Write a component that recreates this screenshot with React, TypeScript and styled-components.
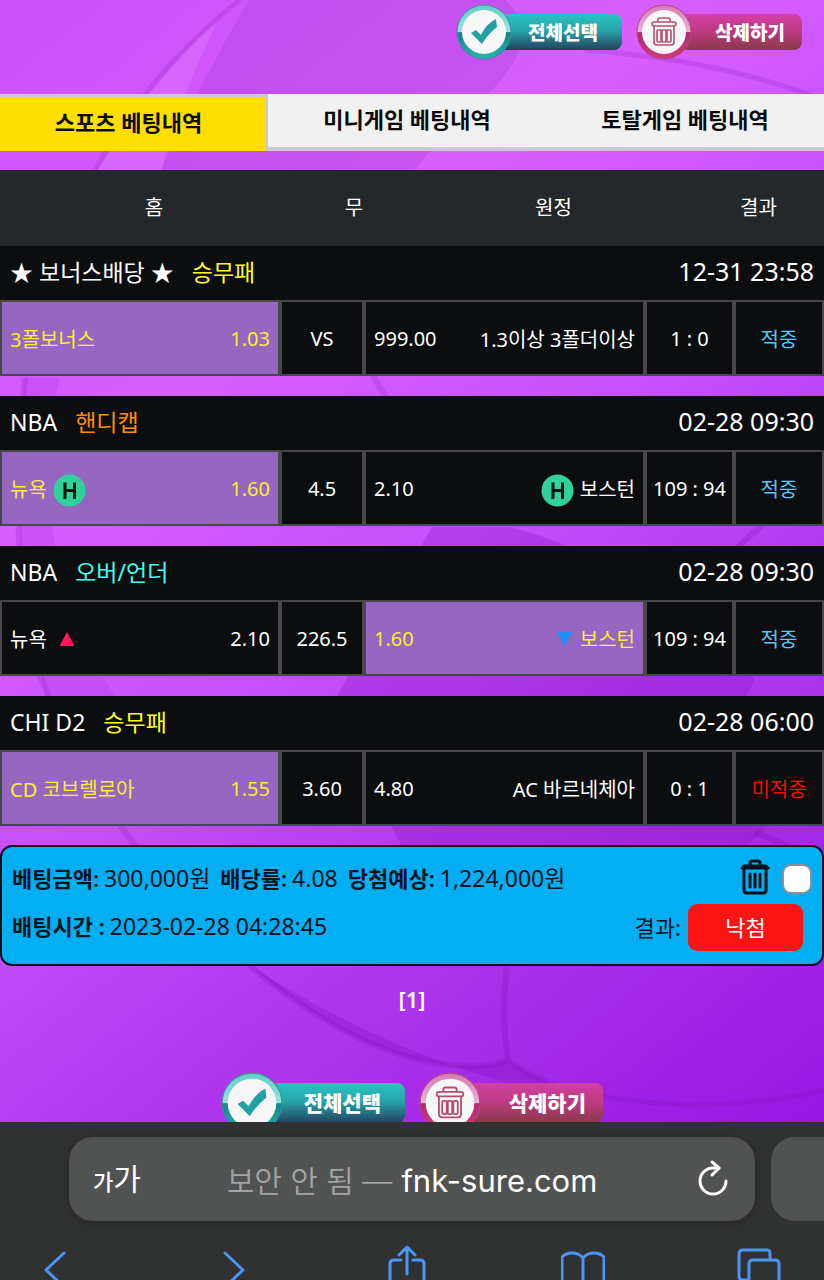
import React from "react";
import styled, { createGlobalStyle } from "styled-components";

const GlobalStyle = createGlobalStyle`
  *, *::before, *::after { box-sizing: border-box; }
  body {
    margin: 0;
    background: #303131;
    font-family: "Noto Sans", "Noto Sans CJK KR", sans-serif;
    color: #fff;
  }
  button { font: inherit; border: 0; padding: 0; background: none; color: inherit; cursor: pointer; }
  a { color: inherit; text-decoration: none; }
`;

const Shell = styled.div`
  display: flex;
  flex-direction: column;
  height: 100vh;
  overflow: hidden;
`;

const Page = styled.main`
  position: relative;
  flex: 1;
  min-height: 0;
  overflow: hidden;
  background: linear-gradient(142deg, #cb50fa 0%, #d85eff 30%, #c750fb 50%, #b23aef 68%, #9816e2 100%);
`;

const Backdrop = styled.svg`
  position: absolute;
  inset: 0;
  width: 100%;
  height: 100%;
`;

const Content = styled.div`
  position: relative;
`;

const TopActions = styled.div`
  display: flex;
  justify-content: flex-end;
  gap: 14px;
  height: 94px;
  padding: 4px 22px 0 0;
`;

const BottomActions = styled.div`
  display: flex;
  justify-content: center;
  gap: 14px;
  padding-top: 58px;
`;

const ActionButton = styled.button<{ $large?: boolean }>`
  display: flex;
  align-items: center;
  width: ${(p) => (p.$large ? 184 : 166)}px;
  height: ${(p) => (p.$large ? 62 : 56)}px;
`;

const ActionBadge = styled.svg<{ $large?: boolean }>`
  position: relative;
  flex: none;
  width: ${(p) => (p.$large ? 62 : 56)}px;
  height: ${(p) => (p.$large ? 62 : 56)}px;
`;

const ActionLabel = styled.span<{ $tone: "teal" | "pink"; $large?: boolean }>`
  flex: 1;
  display: flex;
  align-items: center;
  justify-content: flex-end;
  height: ${(p) => (p.$large ? 40 : 36)}px;
  margin-left: -12px;
  padding-right: ${(p) => (p.$tone === "teal" ? 24 : 17)}px;
  padding-bottom: 2px;
  border-radius: 0 8px 8px 0;
  background: ${(p) =>
    p.$tone === "teal"
      ? "linear-gradient(180deg, #2cc3c3 0%, #26a5ab 45%, #25415f 100%)"
      : "linear-gradient(180deg, #d43fa6 0%, #bb3a80 50%, #8a3a4a 100%)"};
  font-family: "Noto Sans CJK KR", sans-serif;
  font-size: ${(p) => (p.$large ? 21 : 19)}px;
  font-weight: 900;
  line-height: 1;
  white-space: nowrap;
`;

const Tabs = styled.nav`
  display: grid;
  grid-template-columns: 268fr 278fr 278fr;
  height: 57px;
`;

const Tab = styled.button<{ $active?: boolean }>`
  font-size: 22px;
  font-weight: 600;
  color: #0b0b0b;
  line-height: 30px;
  background: ${(p) => (p.$active ? "#ffdf00" : "#f1f1f1")};
  border-style: solid;
  border-color: #cbc8cf;
  border-width: ${(p) => (p.$active ? "3px 3px 0 0" : "0 0 4px 0")};
  padding: 0 ${(p) => (p.$active ? 8 : 0)}px 4px 0;
`;

const Bets = styled.table`
  display: block;
  margin-top: 19px;
`;

const BetsHead = styled.thead`
  display: block;
  background: #25282b;
`;

const HeadRow = styled.tr`
  display: grid;
  grid-template-columns: 308fr 92fr 307fr 103fr;
  align-items: center;
  height: 76px;
  padding-right: 14px;
`;

const HeadCell = styled.th`
  padding: 0 0 4px;
  font-size: 20px;
  font-weight: 400;
`;

const Match = styled.tbody`
  display: block;
  & + & { margin-top: 20px; }
`;

const TitleRow = styled.tr`
  display: flex;
  align-items: center;
  justify-content: space-between;
  height: 54px;
  padding: 0 10px;
  background: #0c0d0f;
`;

const League = styled.th`
  display: flex;
  align-items: baseline;
  gap: 18px;
  padding: 0 0 4px;
  font-size: 23px;
  font-weight: 400;
`;

const Market = styled.span<{ $color: string }>`
  color: ${(p) => p.$color};
`;

const Kickoff = styled.td`
  padding: 0 0 4px;
  font-size: 25px;
`;

const OddsRow = styled.tr`
  display: grid;
  grid-template-columns: 280fr 84fr 281fr 89fr 90fr;
  height: 76px;
`;

const Odds = styled.td<{ $picked?: boolean; $spread?: boolean; $color?: string }>`
  display: flex;
  align-items: center;
  justify-content: ${(p) => (p.$spread ? "space-between" : "center")};
  padding: 0 ${(p) => (p.$spread ? 8 : 0)}px;
  border: 2px solid #48484a;
  background: ${(p) => (p.$picked ? "#9567c1" : "#0c0d0f")};
  color: ${(p) => p.$color ?? (p.$picked ? "#fbee2c" : "#fff")};
  font-size: 20px;
  white-space: nowrap;
`;

const Team = styled.span`
  display: flex;
  align-items: center;
  gap: 6px;
`;

const MarkIcon = styled.svg`
  width: 33px;
  height: 33px;
  margin-top: 4px;
`;

const Slip = styled.section`
  display: flex;
  flex-direction: column;
  height: 121px;
  margin-top: 19px;
  padding: 8px 10px;
  border: 2px solid #061018;
  border-radius: 12px;
  background: #03aef3;
  color: #06141f;
`;

const SlipRow = styled.div`
  display: flex;
  align-items: center;
  justify-content: space-between;
  height: 48px;
`;

const Facts = styled.dl`
  display: flex;
  align-items: baseline;
  gap: 10px;
  margin: 0;
  padding-bottom: 4px;
`;

const Fact = styled.div`
  display: flex;
  align-items: baseline;
  gap: 5px;
`;

const FactName = styled.dt`
  font-size: 22px;
  font-weight: 600;
`;

const FactValue = styled.dd`
  margin: 0;
  font-size: 23px;
`;

const SlipTools = styled.div`
  display: flex;
  align-items: center;
  gap: 11px;
`;

const IconButton = styled.button`
  display: flex;
  padding-bottom: 5px;
`;

const SelectBox = styled.input`
  appearance: none;
  width: 30px;
  height: 30px;
  margin: 0;
  border: 2px solid #8d8d93;
  border-radius: 9px;
  background: #fff;
`;

const Verdict = styled.div`
  display: flex;
  align-items: center;
  gap: 7px;
  padding-right: 9px;
  font-size: 22px;
`;

const VerdictLabel = styled.span`
  padding-bottom: 3px;
`;

const VerdictButton = styled.button`
  width: 115px;
  height: 47px;
  padding-bottom: 3px;
  border-radius: 9px;
  background: #fb1414;
  color: #fff;
`;

const Pager = styled.nav`
  padding-top: 18px;
  text-align: center;
  font-size: 22px;
  font-weight: 600;
  line-height: 30px;
`;

const Chrome = styled.footer`
  flex: none;
  background: #303131;
  padding-top: 15px;
`;

const TabStrip = styled.div`
  display: flex;
  gap: 16px;
  padding-left: 69px;
`;

const AddressBar = styled.div`
  flex: 1;
  display: grid;
  grid-template-columns: 1fr auto 1fr;
  align-items: center;
  height: 84px;
  padding: 0 24px;
  border-radius: 24px;
  background: #515252;
  box-shadow: 0 2px 10px rgba(0, 0, 0, 0.2);
`;

const NextTab = styled.div`
  flex: none;
  width: 53px;
  border-radius: 24px 0 0 24px;
  background: #515252;
`;

const TextSize = styled.button`
  display: flex;
  align-items: baseline;
  justify-self: start;
  padding-bottom: 4px;
  font-family: "Noto Sans CJK KR", sans-serif;
  font-size: 22px;
  font-weight: 500;
`;

const TextSizeLarge = styled.span`
  font-size: 30px;
  font-weight: 400;
`;

const Address = styled.a`
  display: flex;
  align-items: baseline;
  gap: 9px;
  font-family: Inter, "Noto Sans CJK KR", sans-serif;
  font-size: 31px;
  white-space: nowrap;
`;

const Insecure = styled.span`
  font-size: 30px;
  font-weight: 350;
  color: #a3a4a6;
`;

const Reload = styled.button`
  display: flex;
  justify-self: end;
  padding-bottom: 3px;
`;

const Toolbar = styled.nav`
  display: flex;
  justify-content: space-between;
  height: 59px;
  padding: 23px 43px 0 33px;
  overflow: hidden;
`;

const ToolIcon = styled.svg`
  width: 44px;
  height: 44px;
  fill: none;
  stroke: #4d95f5;
  stroke-width: 3;
  stroke-linecap: round;
  stroke-linejoin: round;
`;

function BallBackdrop() {
  return (
    <Backdrop viewBox="0 0 824 1122" preserveAspectRatio="none" aria-hidden="true">
      <path d="M250 0 Q220 45 160 170 L415 170 L430 151 L492 90 Q545 35 505 0Z" fill="#a63bcf" opacity=".3" />
      <path d="M218 20 Q160 70 98 170 L162 170 Q175 110 218 20Z" fill="#e07cff" opacity=".4" />
      <path d="M240 0 Q150 70 95 170" fill="none" stroke="#a22fd2" strokeWidth="5" opacity=".3" />
      <path d="M585 50 Q720 60 824 100" fill="none" stroke="#a22fd2" strokeWidth="5" opacity=".3" />
      <path d="M345 300 Q360 360 388 400" fill="none" stroke="#a22fd2" strokeWidth="6" opacity=".3" />
      <path d="M60 378 Q42 440 54 540 Q70 630 117 700 L47 700 Q5 540 25 378" fill="#a22fd2" opacity=".2" />
      <path d="M25 378 Q5 540 40 676 Q110 850 250 966" fill="none" stroke="#9a24cc" strokeWidth="6" opacity=".28" />
      <path d="M432 527 L510 527 Q640 560 755 680 L744 700 L765 830 L745 848 L403 848 Q370 790 337 696Z" fill="#7c10b8" opacity=".26" />
      <path d="M790 500 Q700 580 640 640" fill="none" stroke="#8519bd" strokeWidth="6" opacity=".3" />
      <path d="M755 832 L824 862" fill="none" stroke="#7c10b8" strokeWidth="6" opacity=".3" />
      <path d="M250 966 Q370 1066 470 1066 Q495 1066 508 1060 L513 1064 Q545 1085 600 1100 Q430 1080 250 966Z" fill="#7c10b8" opacity=".28" />
      <path d="M250 966 Q370 1066 470 1066 Q495 1066 508 1060 Q500 1010 508 960" fill="none" stroke="#7c10b8" strokeWidth="6" opacity=".24" />
      <path d="M511 1062 Q560 1100 690 1105 Q770 1104 824 1090" fill="none" stroke="#7c10b8" strokeWidth="5" opacity=".24" />
    </Backdrop>
  );
}

function Action({ tone, large, label }: { tone: "teal" | "pink"; large?: boolean; label: string }) {
  const teal = tone === "teal";
  const id = `${tone}-${large ? "large" : "small"}`;
  return (
    <ActionButton type="button" $large={large}>
      <ActionBadge viewBox="0 0 56 56" $large={large} aria-hidden="true">
        <defs>
          <linearGradient id={id} x1="0" y1="0" x2="0" y2="1">
            <stop offset="0" stopColor={teal ? "#5fcfc6" : "#d77ab4"} />
            <stop offset=".5" stopColor={teal ? "#9be2db" : "#e9b4d4"} />
            <stop offset=".51" stopColor={teal ? "#16838a" : "#b12c6c"} />
            <stop offset="1" stopColor={teal ? "#25b5b0" : "#d4387c"} />
          </linearGradient>
        </defs>
        <circle cx="28" cy="28" r="27" fill={`url(#${id})`} stroke={teal ? "#3a8f98" : "#a94a80"} strokeWidth="1" />
        <circle cx="28" cy="28" r="22" fill="#f8f7f8" />
        {teal ? (
          <path d="M15 29 L20 26 L25 31 Q30 20 40 15 L41 23 Q32 30 26 40Z" fill="#23a0a3" />
        ) : (
          <g fill="none" stroke="#b54b70" strokeWidth="1.6" strokeLinejoin="round">
            <path d="M22 18 V16 Q22 14 24 14 H32 Q34 14 34 16 V18" />
            <rect x="16" y="18" width="24" height="4" rx="2" />
            <path d="M18 22 V38 Q18 41 21 41 H35 Q38 41 38 38 V22" />
            <rect x="21" y="26" width="4" height="12" rx="1" />
            <rect x="26" y="26" width="4" height="12" rx="1" />
            <rect x="31" y="26" width="4" height="12" rx="1" />
          </g>
        )}
      </ActionBadge>
      <ActionLabel $tone={tone} $large={large}>{label}</ActionLabel>
    </ActionButton>
  );
}

type MarkKind = "H" | "up" | "down";

function Mark({ kind }: { kind: MarkKind }) {
  return (
    <MarkIcon viewBox="0 0 33 33" aria-hidden="true">
      {kind === "H" && (
        <>
          <circle cx="16.5" cy="16.5" r="16" fill="#31d19c" />
          <path d="M12 8.5 V25 M21.5 8.5 V25 M12 16.5 H21.5" stroke="#0a1512" strokeWidth="3" fill="none" />
        </>
      )}
      {kind === "up" && <path d="M6.500 22 L14 8 L21.500 22Z" fill="#ff1a5e" />}
      {kind === "down" && <path d="M15.5 8 L31 8 L23.500 22Z" fill="#1e90ff" />}
    </MarkIcon>
  );
}

interface MatchData {
  league: string;
  market: string;
  marketColor: string;
  time: string;
  home: string;
  homeOdds: string;
  draw: string;
  awayOdds: string;
  away: string;
  homeMark?: MarkKind;
  awayMark?: MarkKind;
  pick: "home" | "away";
  score: string;
  hit: boolean;
}

const matches: MatchData[] = [
  { league: "★ 보너스배당 ★", market: "승무패", marketColor: "#ffff1a", time: "12-31 23:58", home: "3폴보너스", homeOdds: "1.03", draw: "VS", awayOdds: "999.00", away: "1.3이상 3폴더이상", pick: "home", score: "1 : 0", hit: true },
  { league: "NBA", market: "핸디캡", marketColor: "#ff8c00", time: "02-28 09:30", home: "뉴욕", homeMark: "H", homeOdds: "1.60", draw: "4.5", awayOdds: "2.10", away: "보스턴", awayMark: "H", pick: "home", score: "109 : 94", hit: true },
  { league: "NBA", market: "오버/언더", marketColor: "#40ffee", time: "02-28 09:30", home: "뉴욕", homeMark: "up", homeOdds: "2.10", draw: "226.5", awayOdds: "1.60", away: "보스턴", awayMark: "down", pick: "away", score: "109 : 94", hit: true },
  { league: "CHI D2", market: "승무패", marketColor: "#ffff1a", time: "02-28 06:00", home: "CD 코브렐로아", homeOdds: "1.55", draw: "3.60", awayOdds: "4.80", away: "AC 바르네체아", pick: "home", score: "0 : 1", hit: false },
];

function MatchGroup({ match }: { match: MatchData }) {
  return (
    <Match>
      <TitleRow>
        <League scope="rowgroup">
          <span>{match.league}</span>
          <Market $color={match.marketColor}>{match.market}</Market>
        </League>
        <Kickoff>{match.time}</Kickoff>
      </TitleRow>
      <OddsRow>
        <Odds $spread $picked={match.pick === "home"}>
          <Team>
            {match.home}
            {match.homeMark && <Mark kind={match.homeMark} />}
          </Team>
          <span>{match.homeOdds}</span>
        </Odds>
        <Odds>{match.draw}</Odds>
        <Odds $spread $picked={match.pick === "away"}>
          <span>{match.awayOdds}</span>
          <Team>
            {match.awayMark && <Mark kind={match.awayMark} />}
            {match.away}
          </Team>
        </Odds>
        <Odds>{match.score}</Odds>
        <Odds $color={match.hit ? "#55c8f8" : "#f50a0a"}>{match.hit ? "적중" : "미적중"}</Odds>
      </OddsRow>
    </Match>
  );
}

export default function App() {
  return (
    <Shell>
      <GlobalStyle />
      <Page>
        <BallBackdrop />
        <Content>
          <TopActions>
            <Action tone="teal" label="전체선택" />
            <Action tone="pink" label="삭제하기" />
          </TopActions>
          <Tabs>
            <Tab type="button" $active>스포츠 베팅내역</Tab>
            <Tab type="button">미니게임 베팅내역</Tab>
            <Tab type="button">토탈게임 베팅내역</Tab>
          </Tabs>
          <Bets>
            <BetsHead>
              <HeadRow>
                <HeadCell scope="col">홈</HeadCell>
                <HeadCell scope="col">무</HeadCell>
                <HeadCell scope="col">원정</HeadCell>
                <HeadCell scope="col">결과</HeadCell>
              </HeadRow>
            </BetsHead>
            {matches.map((match, i) => (
              <MatchGroup key={i} match={match} />
            ))}
          </Bets>
          <Slip>
            <SlipRow>
              <Facts>
                <Fact>
                  <FactName>베팅금액:</FactName>
                  <FactValue>300,000원</FactValue>
                </Fact>
                <Fact>
                  <FactName>배당률:</FactName>
                  <FactValue>4.08</FactValue>
                </Fact>
                <Fact>
                  <FactName>당첨예상:</FactName>
                  <FactValue>1,224,000원</FactValue>
                </Fact>
              </Facts>
              <SlipTools>
                <IconButton type="button" aria-label="삭제">
                  <svg width="32" height="38" viewBox="0 0 32 38" fill="none" stroke="#07131c" strokeLinecap="round">
                    <path d="M11 7 V5 Q11 3 13 3 H19 Q21 3 21 5 V7" strokeWidth="3" />
                    <path d="M3 10 L5 8 H27 L29 10Z" strokeWidth="3" fill="#07131c" strokeLinejoin="round" />
                    <path d="M5 12 V32 Q5 35 8 35 H24 Q27 35 27 32 V12" strokeWidth="3" />
                    <path d="M11 16 V29 M16 16 V29 M21 16 V29" strokeWidth="3" />
                  </svg>
                </IconButton>
                <SelectBox type="checkbox" aria-label="선택" />
              </SlipTools>
            </SlipRow>
            <SlipRow>
              <Facts>
                <Fact>
                  <FactName>배팅시간 :</FactName>
                  <FactValue>2023-02-28 04:28:45</FactValue>
                </Fact>
              </Facts>
              <Verdict>
                <VerdictLabel>결과:</VerdictLabel>
                <VerdictButton type="button">낙첨</VerdictButton>
              </Verdict>
            </SlipRow>
          </Slip>
          <Pager>
            <a href="#1">[1]</a>
          </Pager>
          <BottomActions>
            <Action tone="teal" large label="전체선택" />
            <Action tone="pink" large label="삭제하기" />
          </BottomActions>
        </Content>
      </Page>
      <Chrome>
        <TabStrip>
          <AddressBar>
            <TextSize type="button">
              가<TextSizeLarge>가</TextSizeLarge>
            </TextSize>
            <Address href="#">
              <Insecure>보안 안 됨 —</Insecure>
              <span>fnk-sure.com</span>
            </Address>
            <Reload type="button" aria-label="새로고침">
              <svg width="36" height="38" viewBox="0 0 36 38" fill="none" stroke="#fff" strokeWidth="3" strokeLinecap="round" strokeLinejoin="round">
                <path d="M31 22 A13 13 0 1 1 18 9 H24" />
                <path d="M17 3 L24 9 L17 16" />
              </svg>
            </Reload>
          </AddressBar>
          <NextTab />
        </TabStrip>
        <Toolbar>
          <ToolIcon viewBox="0 0 44 44"><path d="M31 9 L13 26 L31 43" /></ToolIcon>
          <ToolIcon viewBox="0 0 44 44"><path d="M16 9 L34 26 L16 43" /></ToolIcon>
          <ToolIcon viewBox="0 0 44 44"><path d="M16 16 H9 Q5 16 5 20 V43 M28 16 H35 Q39 16 39 20 V43 M22 30 V3 M14 11 L22 3 L30 11" /></ToolIcon>
          <ToolIcon viewBox="0 0 44 44"><path d="M22 44 V14 Q18 9 11 9 Q5 9 1 13 V44 M22 14 Q26 9 33 9 Q39 9 43 13 V44" /></ToolIcon>
          <ToolIcon viewBox="0 0 44 44"><path d="M33 15 V9 Q33 6 30 6 H6 Q2 6 2 10 V32 Q2 36 6 36 H11 M12 44 V20 Q12 16 16 16 H38 Q42 16 42 20 V44" /></ToolIcon>
        </Toolbar>
      </Chrome>
    </Shell>
  );
}
